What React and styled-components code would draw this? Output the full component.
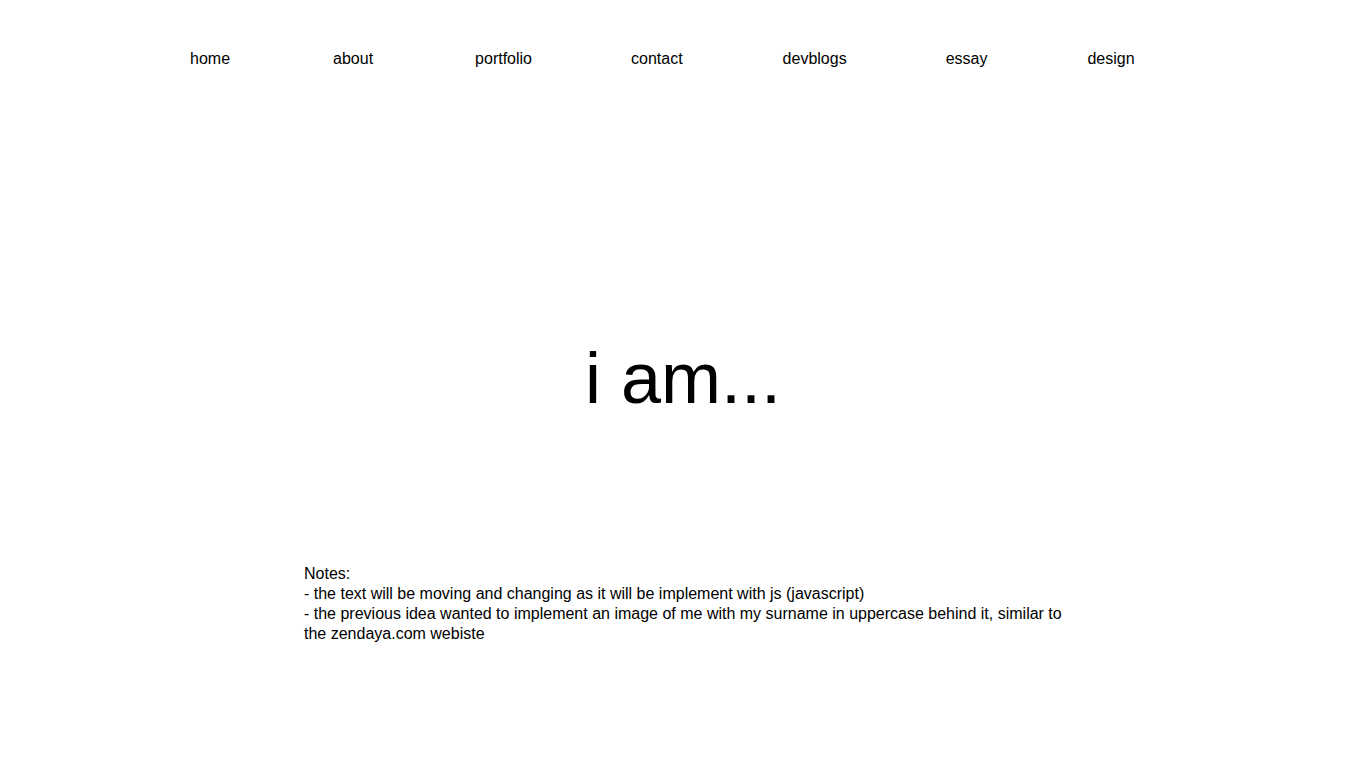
import styled, { createGlobalStyle } from "styled-components";

const GlobalStyle = createGlobalStyle`
  body {
    margin: 0;
    background: #ffffff;
    color: #000000;
    font-family: "Liberation Sans", Arial, sans-serif;
  }
`;

const Page = styled.div`
  width: 1366px;
  min-height: 768px;
`;

const Nav = styled.ul`
  display: flex;
  gap: 99px;
  list-style: none;
  margin: 0;
  padding: 49px 0 0 190px;
`;

const NavItem = styled.li`
  font-size: 16px;
  line-height: 20px;
  margin-right: ${(p) => p.$extra || 0}px;
`;

const NavLink = styled.a`
  color: #000000;
  text-decoration: none;
`;

const Hero = styled.h1`
  margin: 273px 0 0;
  font-size: 72px;
  font-weight: normal;
  line-height: 72px;
  text-align: center;
`;

const Notes = styled.div`
  width: 758px;
  margin: 150px auto 0;
  font-size: 16px;
  line-height: 20px;
`;

const links = [
  { label: "home", extra: 4 },
  { label: "about", extra: 3 },
  { label: "portfolio" },
  { label: "contact", extra: 1 },
  { label: "devblogs" },
  { label: "essay", extra: 1 },
  { label: "design" },
];

function App() {
  return (
    <Page>
      <GlobalStyle />
      <Nav>
        {links.map((l) => (
          <NavItem key={l.label} $extra={l.extra}>
            <NavLink href="#">{l.label}</NavLink>
          </NavItem>
        ))}
      </Nav>
      <Hero>i am...</Hero>
      <Notes>
        Notes:
        <br />- the text will be moving and changing as it will be implement with js (javascript)
        <br />- the previous idea wanted to implement an image of me with my surname in uppercase behind it, similar to the zendaya.com webiste
      </Notes>
    </Page>
  );
}

export default App;
